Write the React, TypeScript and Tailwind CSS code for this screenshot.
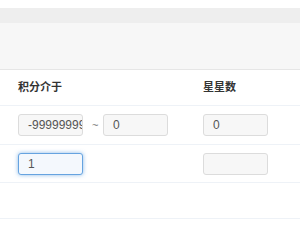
import React from "react";

const font = { fontFamily: '"Liberation Sans", "Noto Sans CJK SC", sans-serif' };

function Box({ value, focused }: { value: string; focused?: boolean }) {
  return (
    <div
      className={
        "w-[65px] h-[22px] shrink-0 rounded-[3px] border pl-[9px] flex items-center overflow-hidden whitespace-nowrap text-[12px] text-[#555] " +
        (focused
          ? "border-[#66a3e0] bg-[#f4f8fd] shadow-[0_0_4px_rgba(102,163,224,0.75)]"
          : "border-[#dcdcdc] bg-[#f7f7f7]")
      }
    >
      {value}
    </div>
  );
}

export default function App() {
  return (
    <div className="w-[300px] h-[250px] bg-white overflow-hidden" style={font}>
      <div className="h-[8px] bg-white" />
      <div className="h-[15px] bg-[#eeeeee]" />
      <div className="h-[47px] bg-[#f7f7f7] border-b border-[#e6e6e6]" />
      <div className="grid grid-cols-[185px_1fr] px-[18px] h-[36px] items-center border-b border-[#eef2f7]">
        <div className="text-[11px] font-bold text-[#333]">积分介于</div>
        <div className="text-[11px] font-bold text-[#333]">星星数</div>
      </div>
      <div className="grid grid-cols-[185px_1fr] px-[18px] pt-[8px] pb-[8px] border-b border-[#eef2f7]">
        <div className="flex items-center">
          <Box value="-9999999999" />
          <span className="ml-[9px] mr-[4px] w-[7px] text-[11px] text-[#777]">~</span>
          <Box value="0" />
        </div>
        <div>
          <Box value="0" />
        </div>
      </div>
      <div className="grid grid-cols-[185px_1fr] px-[18px] pt-[8px] pb-[7px] border-b border-[#eef2f7]">
        <div>
          <Box value="1" focused />
        </div>
        <div>
          <Box value="" />
        </div>
      </div>
      <div className="h-[36px] border-b border-[#eef2f7]" />
    </div>
  );
}
